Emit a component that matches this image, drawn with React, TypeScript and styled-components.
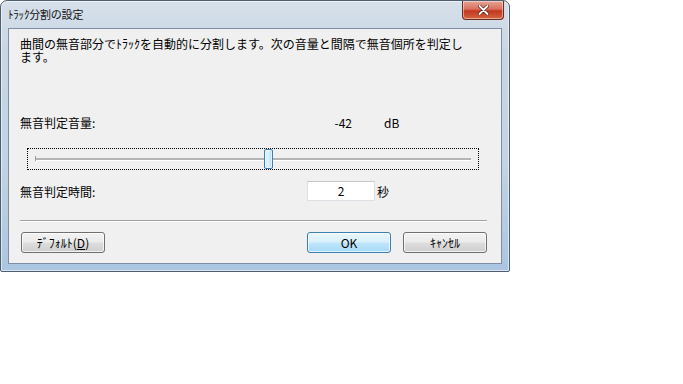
import styled, { createGlobalStyle } from 'styled-components';

const GlobalStyle = createGlobalStyle`
  *, *::before, *::after {
    box-sizing: border-box;
  }
  html, body {
    margin: 0;
    padding: 0;
    background: #ffffff;
  }
  body {
    font-family: "Noto Sans CJK JP", "DejaVu Sans", sans-serif;
    font-size: 12px;
    color: #000;
  }
`;

const Window = styled.div`
  width: 510px;
  height: 272px;
  display: flex;
  flex-direction: column;
  border: 1px solid #4f5e6e;
  border-radius: 7px 7px 2px 2px;
  background: linear-gradient(180deg, #d6e0ea 0%, #c8d6e4 18%, #c3d3e3 60%, #aac6e0 100%);
  box-shadow: inset 0 0 0 1px rgba(255, 255, 255, 0.55);
  padding: 0 7px 7px 7px;
`;

const TitleBar = styled.div`
  height: 27px;
  flex-shrink: 0;
  display: flex;
  align-items: flex-start;
  justify-content: space-between;
`;

const Title = styled.span`
  margin-top: 6px;
  font-size: 11px;
  line-height: 14px;
  color: #111;
  letter-spacing: -0.2px;
`;

const CloseButton = styled.div`
  width: 42px;
  height: 19px;
  margin-right: -2px;
  display: flex;
  align-items: center;
  justify-content: center;
  border: 1px solid #6b2a22;
  border-top: none;
  border-radius: 0 0 4px 4px;
  background: linear-gradient(180deg, #e6a496 0%, #d8705e 45%, #c2361f 55%, #d4653f 100%);
  box-shadow: inset 0 0 0 1px rgba(255, 255, 255, 0.45);
`;

const Client = styled.div`
  flex: 1;
  display: flex;
  flex-direction: column;
  background: #f0f0f0;
  border: 1px solid #7f8fa3;
  padding: 8px 13px 0 11px;
`;

const Description = styled.p`
  margin: 0;
  line-height: 13px;
  font-size: 12px;
`;

const LabelRow = styled.div<{ $top: number }>`
  display: flex;
  align-items: center;
  height: 14px;
  margin-top: ${({ $top }) => $top}px;
  line-height: 14px;
`;

const Label = styled.span`
  width: 286px;
`;

const Value = styled.span`
  width: 46px;
  text-align: right;
`;

const Unit = styled.span`
  margin-left: 32px;
`;

const SliderFocus = styled.div`
  margin: 18px 0 0 7px;
  width: 452px;
  height: 22px;
  border: 1px dotted #000;
  display: flex;
  align-items: center;
  padding: 0 7px;
`;

const Track = styled.div`
  position: relative;
  flex: 1;
  height: 3px;
  background: #b4b4b4;
  border-bottom: 1px solid #ffffff;
`;

const TrackEnd = styled.div`
  position: absolute;
  left: 0;
  top: -2px;
  width: 1px;
  height: 5px;
  background: #9a9a9a;
`;

const Thumb = styled.div`
  position: absolute;
  top: -9px;
  width: 9px;
  height: 20px;
  border: 1px solid #3c7fb1;
  border-radius: 2px;
  background: linear-gradient(90deg, #bfe4f7 0%, #e6f5fd 40%, #a9daf4 100%);
  box-shadow: inset 0 0 0 1px rgba(255, 255, 255, 0.6);
`;

const TimeRow = styled.div`
  display: flex;
  align-items: center;
  margin-top: 11px;
  height: 20px;
`;

const TimeLabel = styled.span`
  width: 287px;
`;

const Input = styled.div`
  width: 68px;
  height: 20px;
  background: #ffffff;
  border: 1px solid #dcdfe3;
  border-top-color: #c5c9ce;
  display: flex;
  align-items: center;
  justify-content: center;
  line-height: 14px;
`;

const Suffix = styled.span`
  margin-left: 2px;
`;

const Separator = styled.div`
  margin-top: 19px;
  width: 467px;
  height: 2px;
  background: #a0a0a0;
  border-bottom: 1px solid #ffffff;
`;

const ButtonRow = styled.div`
  display: flex;
  margin-top: 10px;
  margin-left: 1px;
`;

const Button = styled.div<{ $primary?: boolean; $gap?: number }>`
  width: 84px;
  height: 21px;
  margin-left: ${({ $gap }) => $gap ?? 0}px;
  display: flex;
  align-items: center;
  justify-content: center;
  border: 1px solid ${({ $primary }) => ($primary ? '#3c7fb1' : '#707070')};
  border-radius: 3px;
  font-size: 12px;
  line-height: 14px;
  background: ${({ $primary }) =>
    $primary
      ? 'linear-gradient(180deg, #eaf6fd 0%, #d9f0fc 48%, #bee6fd 52%, #a7d9f5 100%)'
      : 'linear-gradient(180deg, #f2f2f2 0%, #ebebeb 48%, #dddddd 52%, #cfcfcf 100%)'};
  box-shadow: inset 0 0 0 1px rgba(255, 255, 255, 0.7);
`;

const Mnemonic = styled.span`
  text-decoration: underline;
`;

export default function App() {
  const value = -42;
  // thumb position as a fraction of the track (range assumed -90..0)
  const pos = (value + 90) / 90;

  return (
    <>
      <GlobalStyle />
      <Window>
        <TitleBar>
          <Title>ﾄﾗｯｸ分割の設定</Title>
          <CloseButton>
            <svg width="11" height="10" viewBox="0 0 11 10">
              <path d="M1.5 1 L9.5 9 M9.5 1 L1.5 9" stroke="#5a1a10" strokeWidth="3.2" strokeLinecap="round" />
              <path d="M1.5 1 L9.5 9 M9.5 1 L1.5 9" stroke="#ffffff" strokeWidth="1.8" strokeLinecap="round" />
            </svg>
          </CloseButton>
        </TitleBar>
        <Client>
          <Description>
            曲間の無音部分でﾄﾗｯｸを自動的に分割します。次の音量と間隔で無音個所を判定し
            <br />
            ます。
          </Description>
          <LabelRow $top={53}>
            <Label>無音判定音量:</Label>
            <Value>{value}</Value>
            <Unit>dB</Unit>
          </LabelRow>
          <SliderFocus>
            <Track>
              <TrackEnd />
              <Thumb style={{ left: `calc(${pos * 100}% - 4px)` }} />
            </Track>
          </SliderFocus>
          <TimeRow>
            <TimeLabel>無音判定時間:</TimeLabel>
            <Input>2</Input>
            <Suffix>秒</Suffix>
          </TimeRow>
          <Separator />
          <ButtonRow>
            <Button>
              ﾃﾞﾌｫﾙﾄ(<Mnemonic>D</Mnemonic>)
            </Button>
            <Button $primary $gap={202}>OK</Button>
            <Button $gap={12}>ｷｬﾝｾﾙ</Button>
          </ButtonRow>
        </Client>
      </Window>
    </>
  );
}
